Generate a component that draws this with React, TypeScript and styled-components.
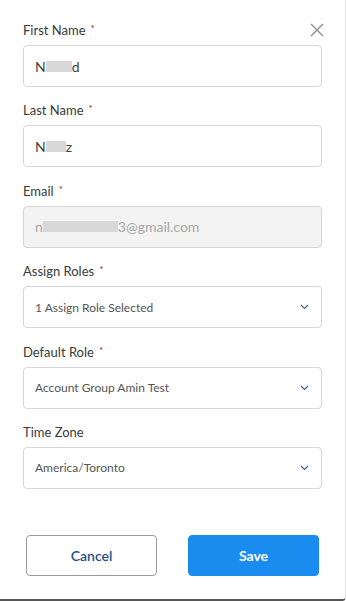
import React from 'react'
import styled, { createGlobalStyle } from 'styled-components'

const GlobalStyle = createGlobalStyle`
  html, body {
    margin: 0;
    padding: 0;
    background: #ffffff;
  }
  * {
    box-sizing: border-box;
  }
`

const StyledModal = styled.div`
  position: relative;
  width: 346px;
  height: 601px;
  padding: 22px 23px 0 23px;
  background: #ffffff;
  border-bottom: 2px solid #555555;
  border-right: 1px solid #e4e4e4;
  border-bottom-right-radius: 4px;
  font-family: Lato, "Open Sans", sans-serif;
  display: flex;
  flex-direction: column;
`

const StyledClose = styled.button`
  position: absolute;
  top: 23px;
  right: 21px;
  width: 14px;
  height: 14px;
  padding: 0;
  border: none;
  background: none;
  cursor: pointer;
`

const StyledFields = styled.div`
  display: flex;
  flex-direction: column;
  gap: 15.4px;
`

const StyledField = styled.div`
  display: flex;
  flex-direction: column;
`

const StyledLabel = styled.label`
  display: block;
  height: 16px;
  font-size: 13px;
  line-height: 16px;
  color: #3a3a3a;
  margin-bottom: 7px;
`

const StyledStar = styled.span`
  position: relative;
  top: -3px;
  color: #9b1f38;
  font-size: 10px;
  line-height: 10px;
  margin-left: 5px;
`

const StyledInput = styled.div<{ $disabled?: boolean }>`
  height: 42px;
  border: 1px solid #d6d6d6;
  border-radius: 4px;
  background: ${p => (p.$disabled ? '#f3f3f3' : '#ffffff')};
  color: ${p => (p.$disabled ? '#a8a8a8' : '#444444')};
  font-size: 14px;
  padding-left: 11px;
  display: flex;
  align-items: center;
`

const StyledBlur = styled.span<{ $w: number }>`
  display: inline-block;
  width: ${p => p.$w}px;
  height: 11px;
  background: #d8d8d8;
`

const StyledSelect = styled.div`
  height: 42px;
  border: 1px solid #d6d6d6;
  border-radius: 4px;
  background: #ffffff;
  color: #555555;
  font-size: 12px;
  padding: 0 12px 0 11px;
  display: flex;
  align-items: center;
  justify-content: space-between;
`

const StyledActions = styled.div`
  margin-top: 46px;
  display: flex;
  justify-content: space-between;
  padding: 0 3px 0 3px;
`

const StyledButton = styled.button<{ $primary?: boolean }>`
  width: 131px;
  height: 41px;
  border-radius: 4px;
  font-family: Lato, "Open Sans", sans-serif;
  font-size: 14px;
  font-weight: ${p => (p.$primary ? 700 : 600)};
  cursor: pointer;
  border: 1px solid ${p => (p.$primary ? '#1a8cef' : '#9a9a9a')};
  background: ${p => (p.$primary ? '#1a8cef' : '#ffffff')};
  color: ${p => (p.$primary ? '#ffffff' : '#1f4f8c')};
`

const Chevron = () => (
  <svg width="9" height="6" viewBox="0 0 9 6" fill="none">
    <path d="M1 1l3.5 3.5L8 1" stroke="#3d5f8f" strokeWidth="1.1" />
  </svg>
)

const selects = [
  { label: 'Assign Roles', required: true, value: '1 Assign Role Selected' },
  { label: 'Default Role', required: true, value: 'Account Group Amin Test' },
  { label: 'Time Zone', required: false, value: 'America/Toronto' },
]

export default function App() {
  return (
    <>
      <GlobalStyle />
      <StyledModal>
        <StyledClose aria-label="Close">
          <svg width="14" height="14" viewBox="0 0 14 14">
            <path d="M1 1l12 12M13 1L1 13" stroke="#8a8a8a" strokeWidth="1.3" />
          </svg>
        </StyledClose>
        <StyledFields>
          <StyledField>
            <StyledLabel>First Name<StyledStar>*</StyledStar></StyledLabel>
            <StyledInput>N<StyledBlur $w={26} />d</StyledInput>
          </StyledField>
          <StyledField>
            <StyledLabel>Last Name<StyledStar>*</StyledStar></StyledLabel>
            <StyledInput>N<StyledBlur $w={20} />z</StyledInput>
          </StyledField>
          <StyledField>
            <StyledLabel>Email<StyledStar>*</StyledStar></StyledLabel>
            <StyledInput $disabled>n<StyledBlur $w={75} />3@gmail.com</StyledInput>
          </StyledField>
          {selects.map(s => (
            <StyledField key={s.label}>
              <StyledLabel>
                {s.label}
                {s.required && <StyledStar>*</StyledStar>}
              </StyledLabel>
              <StyledSelect>
                <span>{s.value}</span>
                <Chevron />
              </StyledSelect>
            </StyledField>
          ))}
        </StyledFields>
        <StyledActions>
          <StyledButton>Cancel</StyledButton>
          <StyledButton $primary>Save</StyledButton>
        </StyledActions>
      </StyledModal>
    </>
  )
}
